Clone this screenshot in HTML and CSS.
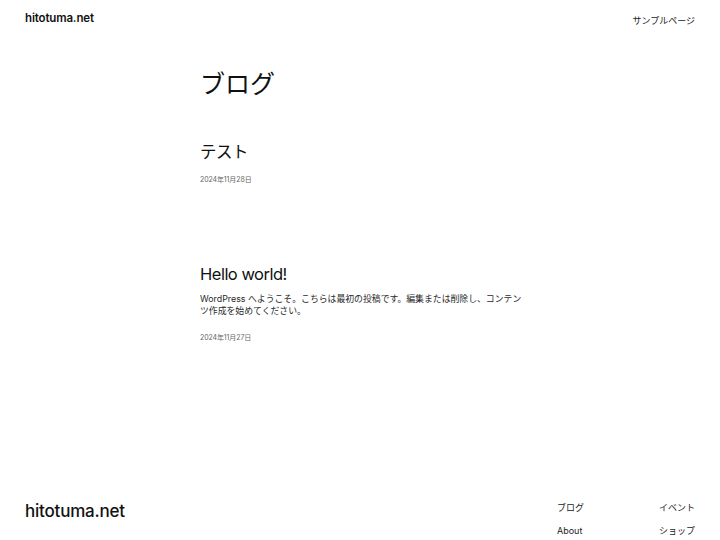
FILE: index.html
```html
<!DOCTYPE html>
<html lang="ja">
<head>
<meta charset="utf-8">
<title>ブログ – hitotuma.net</title>
<link rel="stylesheet" href="styles.css">
</head>
<body>
<header class="site-header">
  <a class="site-title" href="#">hitotuma.net</a>
  <nav class="main-nav"><a href="#">サンプルページ</a></nav>
</header>
<main class="content">
  <h1 class="page-title">ブログ</h1>
  <article class="post post-first">
    <h2 class="post-title">テスト</h2>
    <div class="post-date">2024年11月28日</div>
  </article>
  <article class="post post-second">
    <h2 class="post-title">Hello world!</h2>
    <p class="post-excerpt">WordPress へようこそ。こちらは最初の投稿です。編集または削除し、コンテンツ作成を始めてください。</p>
    <div class="post-date">2024年11月27日</div>
  </article>
</main>
<footer class="site-footer">
  <a class="footer-title" href="#">hitotuma.net</a>
  <nav class="footer-nav">
    <ul class="footer-col">
      <li><a href="#">ブログ</a></li>
      <li><a href="#">About</a></li>
    </ul>
    <ul class="footer-col">
      <li><a href="#">イベント</a></li>
      <li><a href="#">ショップ</a></li>
    </ul>
  </nav>
</footer>
</body>
</html>
```
FILE: styles.css
```css
* { box-sizing: border-box; }
html, body { margin: 0; padding: 0; }
body {
  width: 720px;
  height: 540px;
  overflow: hidden;
  background: #fff;
  color: #111;
  font-family: Inter, "Noto Sans CJK JP", sans-serif;
  display: flex;
  flex-direction: column;
}
a { color: inherit; text-decoration: none; }

.site-header {
  display: flex;
  justify-content: space-between;
  align-items: center;
  padding: 9px 25px 0 25px;
  height: 26px;
}
.site-title {
  font-size: 11.5px;
  font-weight: 600;
  letter-spacing: -0.15px;
}
.main-nav a {
  font-size: 9px;
  color: #222;
}

.content {
  width: 320px;
  margin: 0 auto;
  padding-top: 40px;
  flex: 1;
}
.page-title {
  margin: 0;
  font-size: 25px;
  font-weight: 400;
  line-height: 36px;
}
.post { margin: 0; }
.post-first { margin-top: 38px; }
.post-second { margin-top: 76px; }
.post-title {
  margin: 0;
  font-size: 16.5px;
  font-weight: 400;
  line-height: 24px;
  letter-spacing: -0.5px;
}
.post-date {
  margin-top: 10px;
  font-size: 7px;
  color: #666;
  line-height: 12px;
  letter-spacing: -0.1px;
}
.post-excerpt {
  margin: 7px 0 0 0;
  width: 324px;
  font-size: 8.85px;
  line-height: 12px;
  color: #2a2a2a;
}
.post-second .post-date { margin-top: 15px; }

.site-footer {
  display: flex;
  justify-content: space-between;
  align-items: flex-start;
  padding: 17px 25px 0 25px;
  height: 56px;
}
.footer-title {
  margin-top: 0;
  font-size: 17px;
  font-weight: 500;
  letter-spacing: -0.2px;
}
.footer-nav {
  display: flex;
}
.footer-col {
  list-style: none;
  margin: 0;
  padding: 0;
  width: 102px;
  display: flex;
  flex-direction: column;
  gap: 9px;
}
.footer-col:last-child { width: auto; }
.footer-col li {
  font-size: 9px;
  line-height: 14px;
  color: #222;
}
```
